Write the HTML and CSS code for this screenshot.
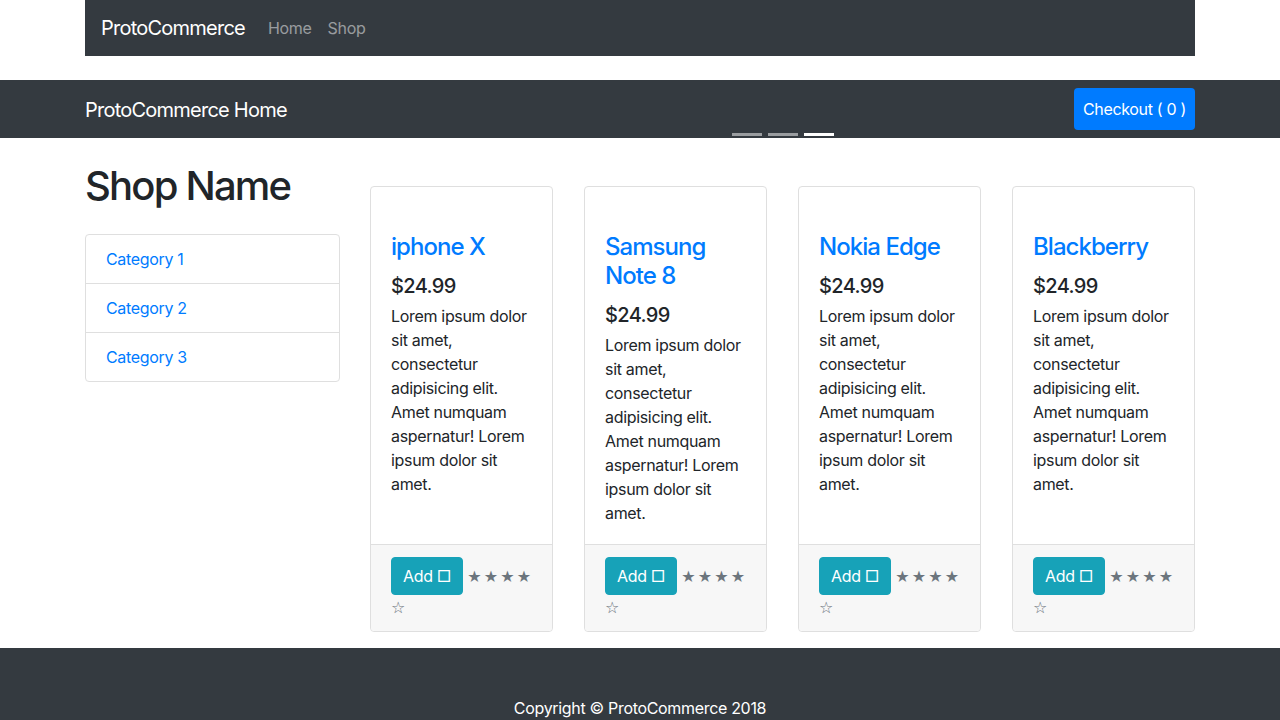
FILE: index.html
```html
<!DOCTYPE html>
<html lang="en">
<head>
<meta charset="utf-8">
<title>ProtoCommerce</title>
<link rel="stylesheet" href="styles.css">
</head>
<body>
<div class="container">
  <nav class="topnav">
    <a class="brand" href="#">ProtoCommerce</a>
    <a class="navlink" href="#">Home</a>
    <a class="navlink" href="#">Shop</a>
  </nav>
</div>

<div class="subbar">
  <div class="container subbar-inner">
    <span class="subbrand">ProtoCommerce Home</span>
    <a class="btn-checkout" href="#">Checkout ( 0 )</a>
  </div>
</div>

<div class="container main">
  <aside class="sidebar">
    <h1 class="shop-name">Shop Name</h1>
    <div class="list-group">
      <a class="list-item" href="#">Category 1</a>
      <a class="list-item" href="#">Category 2</a>
      <a class="list-item" href="#">Category 3</a>
    </div>
  </aside>
  <section class="content">
    <div class="carousel">
      <ol class="indicators">
        <li></li><li></li><li class="active"></li>
      </ol>
    </div>
    <div class="cards">
      <div class="card">
        <div class="card-body">
          <h4 class="card-title"><a href="#">iphone X</a></h4>
          <h5 class="price">$24.99</h5>
          <p class="card-text">Lorem ipsum dolor sit amet, consectetur adipisicing elit. Amet numquam aspernatur! Lorem ipsum dolor sit amet.</p>
        </div>
        <div class="card-footer"><button class="btn-add">Add &#9633;</button> <small class="stars">&#9733; &#9733; &#9733; &#9733;</small> <small class="stars">&#9734;</small></div>
      </div>
      <div class="card">
        <div class="card-body">
          <h4 class="card-title"><a href="#">Samsung Note 8</a></h4>
          <h5 class="price">$24.99</h5>
          <p class="card-text">Lorem ipsum dolor sit amet, consectetur adipisicing elit. Amet numquam aspernatur! Lorem ipsum dolor sit amet.</p>
        </div>
        <div class="card-footer"><button class="btn-add">Add &#9633;</button> <small class="stars">&#9733; &#9733; &#9733; &#9733;</small> <small class="stars">&#9734;</small></div>
      </div>
      <div class="card">
        <div class="card-body">
          <h4 class="card-title"><a href="#">Nokia Edge</a></h4>
          <h5 class="price">$24.99</h5>
          <p class="card-text">Lorem ipsum dolor sit amet, consectetur adipisicing elit. Amet numquam aspernatur! Lorem ipsum dolor sit amet.</p>
        </div>
        <div class="card-footer"><button class="btn-add">Add &#9633;</button> <small class="stars">&#9733; &#9733; &#9733; &#9733;</small> <small class="stars">&#9734;</small></div>
      </div>
      <div class="card">
        <div class="card-body">
          <h4 class="card-title"><a href="#">Blackberry</a></h4>
          <h5 class="price">$24.99</h5>
          <p class="card-text">Lorem ipsum dolor sit amet, consectetur adipisicing elit. Amet numquam aspernatur! Lorem ipsum dolor sit amet.</p>
        </div>
        <div class="card-footer"><button class="btn-add">Add &#9633;</button> <small class="stars">&#9733; &#9733; &#9733; &#9733;</small> <small class="stars">&#9734;</small></div>
      </div>
    </div>
  </section>
</div>

<footer class="footer">
  <p>Copyright &copy; ProtoCommerce 2018</p>
</footer>
</body>
</html>
```

FILE: styles.css
```css
* { box-sizing: border-box; }
html, body { margin: 0; padding: 0; }
body {
  font-family: Inter, "Noto Sans", "Liberation Sans", sans-serif;
  font-size: 16px;
  line-height: 1.5;
  letter-spacing: -0.02em;
  color: #212529;
  background: #fff;
}
a { text-decoration: none; color: #007bff; }
.container { width: 1110px; margin: 0 auto; }

.topnav {
  background: #343a40;
  height: 56px;
  display: flex;
  align-items: center;
  padding: 0 16px;
}
.brand { color: #fff; font-size: 20px; letter-spacing: -0.038em; margin-right: 15px; line-height: 30px; }
.navlink { color: rgba(255,255,255,.5); padding: 0 8px; }

.subbar { background: #343a40; margin-top: 24px; height: 58px; }
.subbar-inner { height: 58px; display: flex; align-items: center; justify-content: space-between; }
.subbrand { color: #fff; font-size: 20px; letter-spacing: -0.038em; line-height: 30px; padding-top: 1px; }
.btn-checkout {
  background: #007bff; color: #fff; border-radius: 4px;
  padding: 9px 9px; line-height: 24px;
}

.main { display: flex; gap: 30px; }
.sidebar { width: 255px; flex: none; }
.shop-name { font-size: 40px; font-weight: 500; letter-spacing: -0.045em; line-height: 48px; margin: 24px 0; }
.list-group { border: 1px solid #dfdfdf; border-radius: 4px; display: flex; flex-direction: column; }
.list-item { padding: 12px 20px; line-height: 24px; }
.list-item + .list-item { border-top: 1px solid #dfdfdf; }

.content { flex: 1; display: flex; flex-direction: column; }
.carousel { position: relative; height: 0; margin: 24px 0; }
.indicators {
  position: absolute; left: 0; right: 0; bottom: 26px;
  display: flex; justify-content: center; gap: 6px;
  margin: 0; padding: 0; list-style: none;
}
.indicators li { width: 30px; height: 3px; background: rgba(255,255,255,.5); }
.indicators li.active { background: #fff; }

.cards { display: grid; grid-template-columns: repeat(4, 1fr); column-gap: 31px; margin-bottom: 16px; }
.card { border: 1px solid #dfdfdf; border-radius: 4px; display: flex; flex-direction: column; }
.card-body { flex: 1; padding: 46px 20px 19px; }
.card-title { font-size: 24px; font-weight: 500; letter-spacing: -0.04em; line-height: 1.2; margin: 0 0 12px; }
.price { font-size: 20px; font-weight: 500; letter-spacing: -0.03em; line-height: 1.2; margin: 0 0 6px; }
.card-text { margin: 0; }
.card-footer {
  background: #f7f7f7; border-top: 1px solid #dfdfdf;
  padding: 12px 20px 11px; border-radius: 0 0 4px 4px;
}
.btn-add {
  font: inherit; letter-spacing: inherit; line-height: 24px; color: #fff; background: #17a2b8;
  border: 1px solid #17a2b8; border-radius: 4px; padding: 6px 11px;
}
.stars { color: #6c757d; font-size: 16px; letter-spacing: 0; word-spacing: -3px; white-space: nowrap; font-family: "DejaVu Sans", sans-serif; }

.footer { background: #343a40; padding: 48px 0; text-align: center; }
.footer p { color: #fff; margin: 0; }
```
